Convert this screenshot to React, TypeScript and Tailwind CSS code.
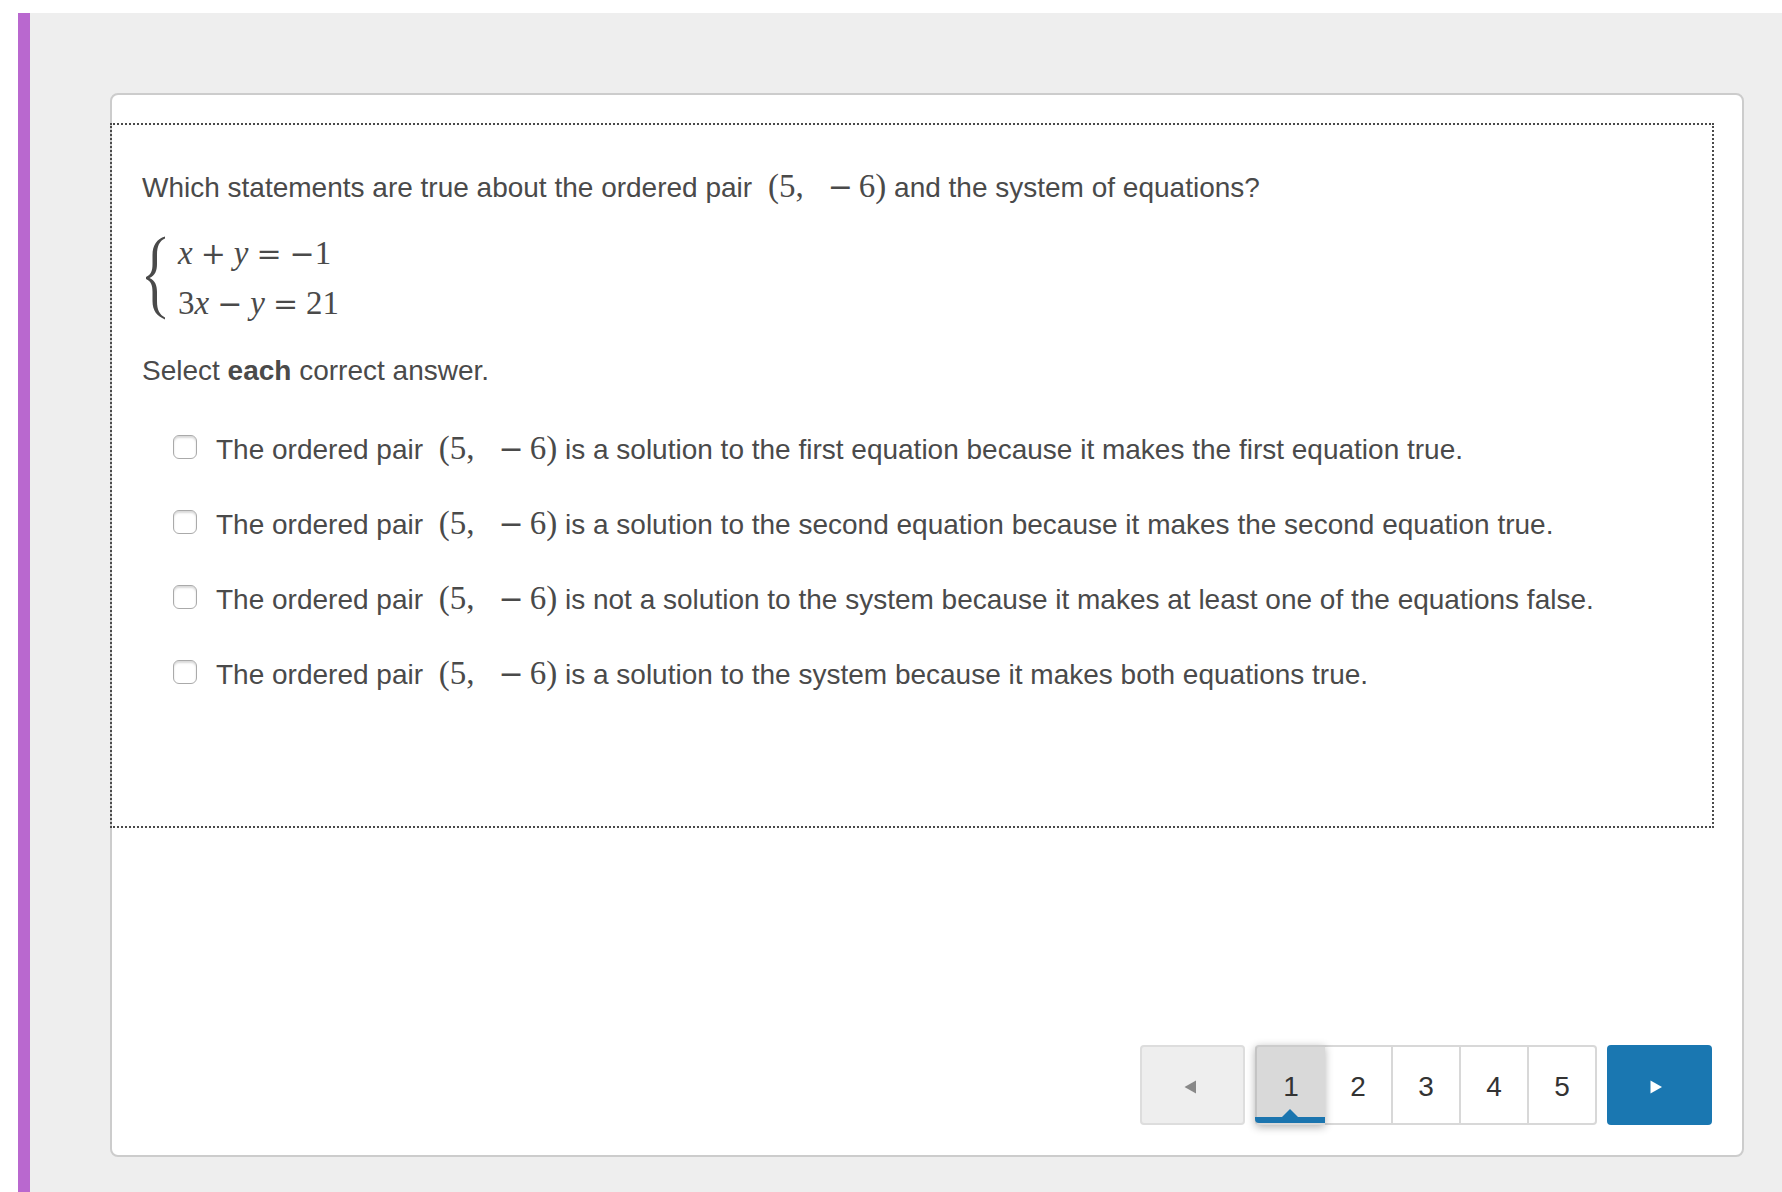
import React, { useState } from "react";

type Choice = {
  id: string;
  text: string;
};

const choices: Choice[] = [
  {
    id: "first",
    text: "is a solution to the first equation because it makes the first equation true.",
  },
  {
    id: "second",
    text: "is a solution to the second equation because it makes the second equation true.",
  },
  {
    id: "neither",
    text: "is not a solution to the system because it makes at least one of the equations false.",
  },
  {
    id: "both",
    text: "is a solution to the system because it makes both equations true.",
  },
];

const pages = [1, 2, 3, 4, 5];

const mathFont = "font-['Liberation_Serif',serif] text-[33px]";
const operatorFont = "font-['DejaVu_Serif',serif] text-[30px]";

const OrderedPair: React.FC = () => (
  <span className={`${mathFont} ml-2 leading-none whitespace-nowrap`}>
    (5,
    <span className={`${operatorFont} ml-6 mr-1.5 leading-none`}>−</span>
    6)
  </span>
);

const Equations: React.FC = () => (
  <div className="mt-5 flex items-center">
    <svg
      className="ml-1 mr-3 h-[84px] w-5 shrink-0"
      viewBox="0 0 20 84"
      fill="currentColor"
      aria-hidden="true"
    >
      <path d="M19 0.500C11 3 6.500 9 6.500 19V28C6.500 35 5 38.500 0 41V43C5 45.500 6.500 49 6.500 56V65C6.500 75 11 80 19 83.500V81.500C13.500 78.500 11 74 11 65V56C11 49 9 44.500 3.500 42C9 39.500 11 35 11 28V19C11 10 13.500 5 19 2.500Z" />
    </svg>
    <div className={`${mathFont} leading-[50px]`}>
      <div className="flex h-[50px] items-baseline">
        <i>x</i>
        <span className={`${operatorFont} mx-2`}>+</span>
        <i>y</i>
        <span className={`${operatorFont} mx-2`}>=</span>
        <span className={operatorFont}>−</span>
        <span>1</span>
      </div>
      <div className="flex h-[50px] items-baseline">
        <span>3</span>
        <i>x</i>
        <span className={`${operatorFont} mx-2`}>−</span>
        <i>y</i>
        <span className={`${operatorFont} mx-2`}>=</span>
        <span>21</span>
      </div>
    </div>
  </div>
);

const Pager: React.FC = () => {
  const [page, setPage] = useState(1);

  return (
    <nav className="mt-auto mr-[30px] mb-[30px] flex h-20 justify-end gap-2.5 text-[#333]">
      <button
        aria-label="Previous"
        disabled={page === 1}
        onClick={() => setPage(page - 1)}
        className="flex w-[105px] items-center justify-center rounded border-2 border-[#ddd] bg-[#eee] pt-1 pr-1.5"
      >
        <svg className="h-3.5 w-3" viewBox="0 0 12 14" fill="#888">
          <path d="M12 0.500V13.500L0.500 7Z" />
        </svg>
      </button>
      <div className="flex">
        {pages.map((n) => (
          <button
            key={n}
            onClick={() => setPage(n)}
            className={`relative border-y-2 border-[#d8d8d8] pt-1 text-[28px] first:rounded-l last:rounded-r ${
              n === 1 ? "w-[70px] border-l-2" : "w-[68px] border-r-2"
            } ${
              n === page
                ? "z-10 border-y-[#ccc] border-l-[#c4c4c4] border-b-transparent bg-[#d9d9d9] shadow-[0_2px_8px_rgba(0,0,0,0.3)]"
                : "bg-white"
            }`}
          >
            {n}
            {n === page && (
              <svg
                className="absolute -left-0.5 bottom-0 h-3.5 w-[70px]"
                viewBox="0 0 70 14"
                fill="#1b75af"
                aria-hidden="true"
              >
                <path d="M0 8H27L35 0L43 8H70V14H4Q0 14 0 10Z" />
              </svg>
            )}
          </button>
        ))}
      </div>
      <button
        aria-label="Next"
        disabled={page === pages.length}
        onClick={() => setPage(page + 1)}
        className="flex w-[105px] items-center justify-center rounded bg-[#1a77b1] pt-1 pr-2"
      >
        <svg className="h-3.5 w-3" viewBox="0 0 12 14" fill="#fff">
          <path d="M0.500 0.500V13.500L12 7Z" />
        </svg>
      </button>
    </nav>
  );
};

export default function App() {
  return (
    <div className="flex min-h-screen bg-white pt-[13px] pl-[18px] font-['Liberation_Sans',Arial,sans-serif] text-[28px] leading-10 text-[#4a4a4a]">
      <main className="flex grow border-l-12 border-[#b968cf] bg-[#eee] pt-20 pr-[38px] pb-[35px] pl-20">
        <div className="flex grow flex-col rounded-lg border-2 border-[#ccc] bg-white pt-[30px]">
          <section className="mr-[30px] px-[30px] pt-[43px] pb-[131px] outline-2 outline-dotted outline-[#4a4a4a]">
            <p>
              Which statements are true about the ordered pair <OrderedPair />{" "}
              and the system of equations?
            </p>
            <Equations />
            <p className="mt-[23px]">
              Select <strong>each</strong> correct answer.
            </p>
            <ul className="mt-[39px] ml-[31px] space-y-[35px]">
              {choices.map((choice) => (
                <li key={choice.id} className="flex items-start">
                  <input
                    type="checkbox"
                    id={choice.id}
                    className="mt-[5px] mr-[19px] size-6 shrink-0 appearance-none rounded-md border border-[#aaa] bg-white shadow-[inset_0_2px_2px_rgba(0,0,0,0.15)] checked:bg-[#1a77b1]"
                  />
                  <label htmlFor={choice.id}>
                    The ordered pair <OrderedPair /> {choice.text}
                  </label>
                </li>
              ))}
            </ul>
          </section>
          <Pager />
        </div>
      </main>
    </div>
  );
}
